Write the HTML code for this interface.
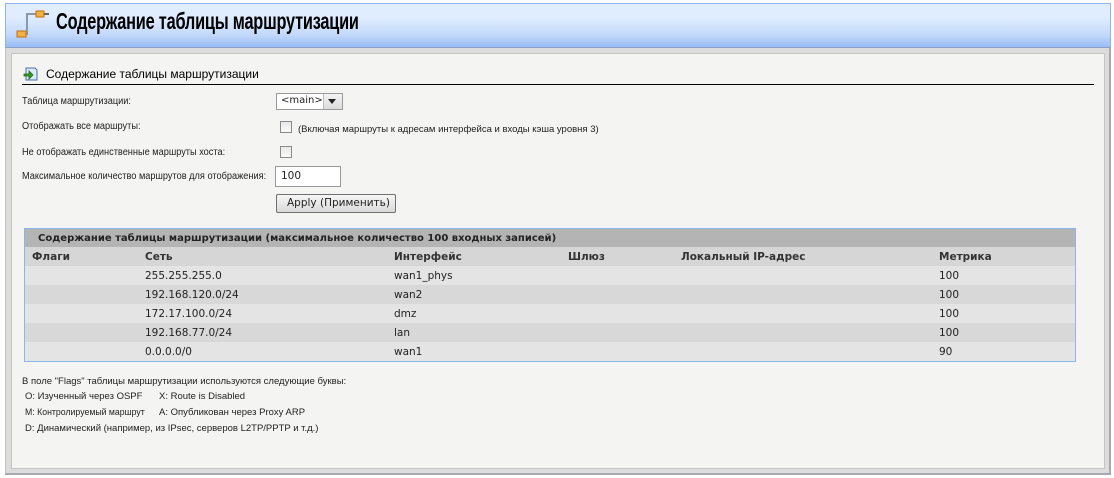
<!DOCTYPE html>
<html><head><meta charset="utf-8"><style>
*{margin:0;padding:0;box-sizing:border-box}
body{width:1114px;height:478px;background:#fff;position:relative;overflow:hidden;font-family:"Liberation Sans",sans-serif;color:#000}
.abs{position:absolute;white-space:nowrap}
#hdr{left:5px;top:3px;width:1106px;height:45px;border:1px solid #8fb3ef;border-bottom:1px solid #8aa0c8;background:linear-gradient(#e0edff 0%,#e0edff 30%,#c4dafa 70%,#99bdf5 100%)}
#outer{left:5px;top:48px;width:1106px;height:427px;background:#dcdcdc;border-right:2px solid #a8a8b0;border-bottom:2px solid #a8a8b0;border-left:1px solid #c0c0c0}
#panel{left:11px;top:53px;width:1094px;height:416px;background:#f4f4f2;border:1px solid #c4c4c0}
.f{font-size:10px;color:#222;transform:scaleX(0.92);transform-origin:0 0}
.t{font-family:"DejaVu Sans",Verdana,sans-serif;font-size:10.5px;color:#222}
.tb{font-family:"DejaVu Sans",Verdana,sans-serif;font-size:10.5px;font-weight:bold;color:#333}
.cb{width:12px;height:12px;border:1px solid #8a8a8a;background:linear-gradient(#e8e8e8,#fafafa)}
</style></head><body>
<div class="abs" id="hdr"></div>
<svg class="abs" style="left:14px;top:8px" width="36" height="30" viewBox="0 0 36 30">
<path d="M6 26 H13 V6 H26" stroke="#8899aa" stroke-width="2" fill="none"/>
<rect x="3" y="23" width="9" height="6" fill="#f4b040" stroke="#c07010"/>
<rect x="22" y="3" width="8" height="6" fill="#f4b040" stroke="#c07010"/>
<rect x="30" y="5" width="5" height="2" fill="#666"/>
</svg>
<div class="abs" style="left:56px;top:8px;font-size:23px;font-weight:bold;letter-spacing:-0.3px;color:#000;transform:scaleX(0.71);transform-origin:0 0">Содержание таблицы маршрутизации</div>
<div class="abs" id="outer"></div>
<div class="abs" id="panel"></div>
<svg class="abs" style="left:23px;top:66px" width="16" height="16" viewBox="0 0 16 16">
<path d="M3 2 H12 L14 4 V14 H3 Z" fill="#dde8f8" stroke="#4a6ea8"/>
<path d="M1 8 H6 V5 L10 9 L6 13 V10 H1 Z" fill="#3a9a2a" stroke="#1e6a12" stroke-width="0.8"/>
</svg>
<div class="abs" style="left:46px;top:67px;font-size:12px;color:#000">Содержание таблицы маршрутизации</div>
<div class="abs" style="left:22px;top:84px;width:1072px;height:1px;background:#000"></div>

<div class="abs f" style="left:22px;top:96px">Таблица маршрутизации:</div>
<div class="abs" style="left:276px;top:93px;width:67px;height:17px;border:1px solid #9a9a9a;background:#fff"></div>
<div class="abs t" style="left:281px;top:95px;font-size:10px">&lt;main&gt;</div>
<div class="abs" style="left:323px;top:94px;width:19px;height:15px;background:linear-gradient(#f4f4f4,#dcdcdc);border-left:1px solid #bbb"></div>
<div class="abs" style="left:328px;top:99px;width:0;height:0;border-left:4px solid transparent;border-right:4px solid transparent;border-top:5px solid #222"></div>

<div class="abs f" style="left:22px;top:121px">Отображать все маршруты:</div>
<div class="abs cb" style="left:280px;top:121px"></div>
<div class="abs f" style="left:298px;top:124px;font-size:9.5px;transform:none">(Включая маршруты к адресам интерфейса и входы кэша уровня 3)</div>

<div class="abs f" style="left:22px;top:147px">Не отображать единственные маршруты хоста:</div>
<div class="abs cb" style="left:280px;top:146px"></div>

<div class="abs f" style="left:22px;top:171px">Максимальное количество маршрутов для отображения:</div>
<div class="abs" style="left:275px;top:166px;width:66px;height:21px;border:1px solid #9a9a9a;background:#fff"></div>
<div class="abs t" style="left:281px;top:170px">100</div>

<div class="abs" style="left:276px;top:194px;width:120px;height:19px;border:1px solid #707070;border-radius:2px;background:linear-gradient(#f6f6f6,#dadada)"></div>
<div class="abs t" style="left:287px;top:197px">Apply (Применить)</div>

<div class="abs" style="left:24px;top:228px;width:1052px;height:134px;border:1px solid #8fb3ef;background:#e4e4e4"></div>
<div class="abs" style="left:25px;top:229px;width:1050px;height:18px;background:#b4b4b4"></div>
<div class="abs" style="left:25px;top:247px;width:1050px;height:19px;background:#d6d6d6"></div>
<div class="abs" style="left:25px;top:285px;width:1050px;height:19px;background:#d8d8d8"></div>
<div class="abs" style="left:25px;top:323px;width:1050px;height:19px;background:#d8d8d8"></div>
<div class="abs tb" style="left:38px;top:233px;color:#222;font-size:10px">Содержание таблицы маршрутизации (максимальное количество 100 входных записей)</div>
<div class="abs tb" style="left:32px;top:251px">Флаги</div>
<div class="abs tb" style="left:145px;top:251px">Сеть</div>
<div class="abs tb" style="left:394px;top:251px">Интерфейс</div>
<div class="abs tb" style="left:568px;top:251px">Шлюз</div>
<div class="abs tb" style="left:681px;top:251px">Локальный IP-адрес</div>
<div class="abs tb" style="left:939px;top:251px">Метрика</div>

<div class="abs t" style="left:145px;top:270px">255.255.255.0</div><div class="abs t" style="left:394px;top:270px">wan1_phys</div><div class="abs t" style="left:939px;top:270px">100</div>
<div class="abs t" style="left:145px;top:289px">192.168.120.0/24</div><div class="abs t" style="left:394px;top:289px">wan2</div><div class="abs t" style="left:939px;top:289px">100</div>
<div class="abs t" style="left:145px;top:308px">172.17.100.0/24</div><div class="abs t" style="left:394px;top:308px">dmz</div><div class="abs t" style="left:939px;top:308px">100</div>
<div class="abs t" style="left:145px;top:327px">192.168.77.0/24</div><div class="abs t" style="left:394px;top:327px">lan</div><div class="abs t" style="left:939px;top:327px">100</div>
<div class="abs t" style="left:145px;top:346px">0.0.0.0/0</div><div class="abs t" style="left:394px;top:346px">wan1</div><div class="abs t" style="left:939px;top:346px">90</div>

<div class="abs f" style="left:22px;top:376px;font-size:9.5px;transform:none">В поле "Flags" таблицы маршрутизации используются следующие буквы:</div>
<div class="abs f" style="left:25px;top:391px;font-size:9.5px;transform:none">O: Изученный через OSPF</div>
<div class="abs f" style="left:159px;top:391px;font-size:9.5px;transform:none">X: Route is Disabled</div>
<div class="abs f" style="left:25px;top:407px;font-size:9.5px">M: Контролируемый маршрут</div>
<div class="abs f" style="left:159px;top:407px;font-size:9.5px;transform:none">A: Опубликован через Proxy ARP</div>
<div class="abs f" style="left:25px;top:423px;font-size:9.5px;transform:none">D: Динамический (например, из IPsec, серверов L2TP/PPTP и т.д.)</div>
</body></html>
